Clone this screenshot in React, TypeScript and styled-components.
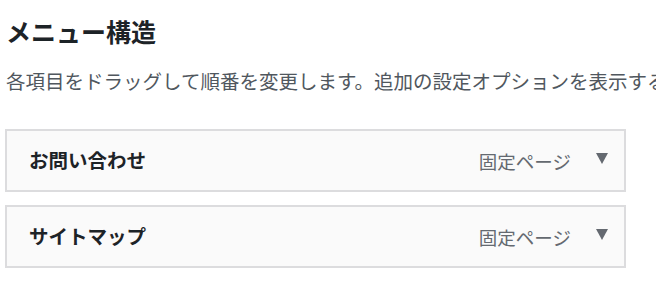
import React from "react";
import styled, { createGlobalStyle } from "styled-components";

const Global = createGlobalStyle`
  html, body { margin: 0; padding: 0; background: #ffffff; overflow: hidden; }
  body { font-family: "Noto Sans CJK JP", "Noto Sans", sans-serif; }
`;

const Page = styled.div`
  width: 656px;
  height: 296px;
  padding: 13px 0 0 6px;
  box-sizing: border-box;
  overflow: hidden;
`;

const Heading = styled.h2`
  margin: 0;
  font-size: 25px;
  line-height: 36px;
  font-weight: 700;
  color: #1d2327;
`;

const Description = styled.p`
  margin: 18px 0 0 0;
  font-size: 19.5px;
  line-height: 28px;
  color: #50575e;
  white-space: nowrap;
`;

const List = styled.ul`
  list-style: none;
  margin: 34px 0 0 -1px;
  padding: 0;
  display: flex;
  flex-direction: column;
  gap: 13px;
  width: 621px;
`;

const Handle = styled.li`
  height: 63px;
  box-sizing: border-box;
  border: 2px solid #dcdcde;
  background: #fafafa;
  display: flex;
  align-items: center;
  padding: 0 16px 0 22px;
`;

const Title = styled.span`
  flex: 1;
  font-size: 19.5px;
  font-weight: 700;
  color: #1d2327;
  padding-bottom: 2px;
`;

const ItemType = styled.span`
  font-size: 18.5px;
  color: #646970;
  margin-right: 25px;
`;

const Arrow = styled.span`
  width: 0;
  height: 0;
  border-left: 6.5px solid transparent;
  border-right: 6.5px solid transparent;
  border-top: 11px solid #646970;
  margin-bottom: 4px;
`;

const items = [
  { title: "お問い合わせ", type: "固定ページ" },
  { title: "サイトマップ", type: "固定ページ" },
];

export default function App() {
  return (
    <Page>
      <Global />
      <Heading>メニュー構造</Heading>
      <Description>
        各項目をドラッグして順番を変更します。追加の設定オプションを表示する
      </Description>
      <List>
        {items.map((it) => (
          <Handle key={it.title}>
            <Title>{it.title}</Title>
            <ItemType>{it.type}</ItemType>
            <Arrow />
          </Handle>
        ))}
      </List>
    </Page>
  );
}
